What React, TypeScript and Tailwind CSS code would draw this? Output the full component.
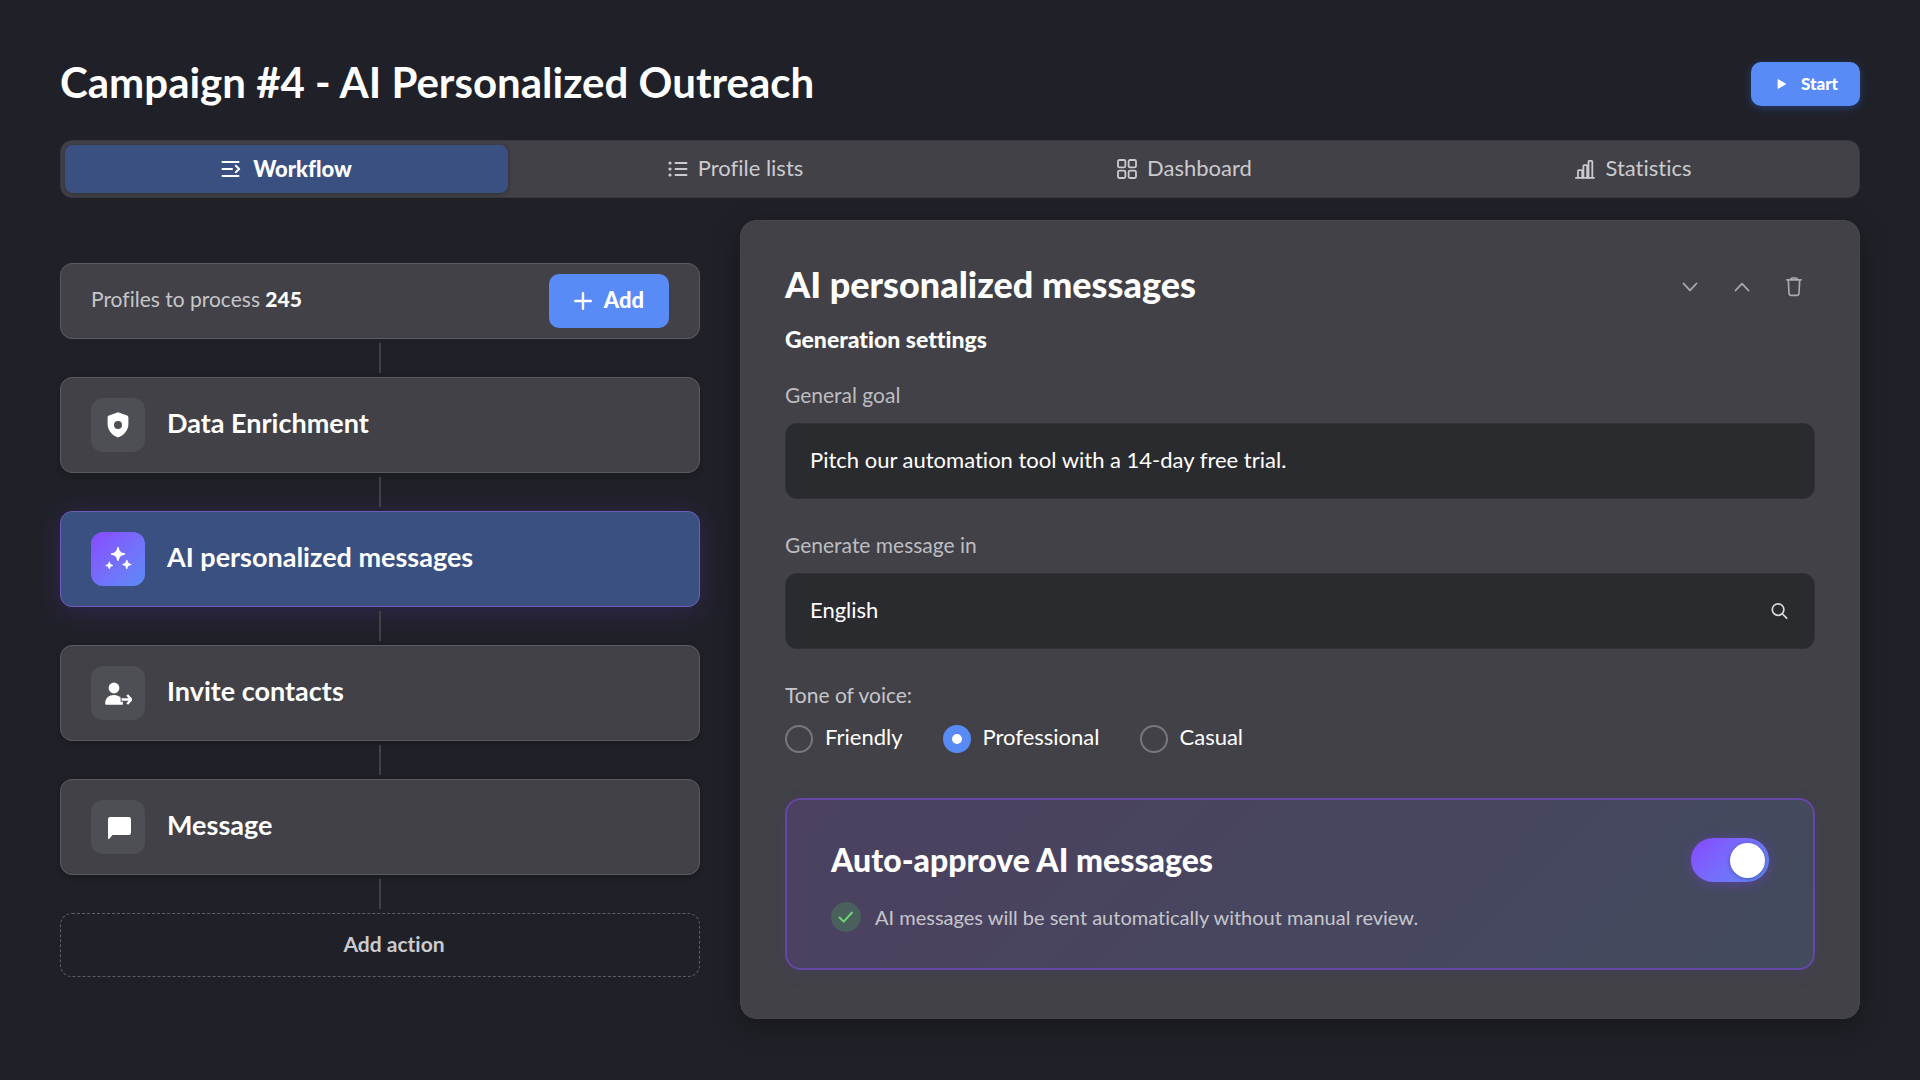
import React, { useState } from 'react'

type IconProps = { className?: string }

const tabs = [
  { id: 'workflow', label: 'Workflow', icon: WorkflowIcon },
  { id: 'profiles', label: 'Profile lists', icon: ListIcon },
  { id: 'dashboard', label: 'Dashboard', icon: GridIcon },
  { id: 'statistics', label: 'Statistics', icon: ChartIcon },
]

const steps = [
  { id: 'enrichment', label: 'Data Enrichment', icon: ShieldIcon },
  { id: 'ai', label: 'AI personalized messages', icon: SparklesIcon },
  { id: 'invite', label: 'Invite contacts', icon: InviteIcon },
  { id: 'message', label: 'Message', icon: MessageIcon },
]

const tones = ['Friendly', 'Professional', 'Casual']

export default function App() {
  return (
    <main className="min-h-screen bg-[#202128] px-15 py-15 font-['Lato','Noto_Sans',sans-serif] text-white [font-variant-ligatures:none]">
      <header className="flex min-h-12 items-center justify-between">
        <h1 className="pb-1 text-[42px] leading-11 font-bold">Campaign #4 - AI Personalized Outreach</h1>
        <button className="flex h-11 items-center gap-2.5 rounded-[10px] bg-[#598bf6] px-[22px] text-[17px] font-black shadow-[0_2px_8px_rgba(40,100,220,0.4)]">
          <PlayIcon className="size-[18px]" />
          Start
        </button>
      </header>

      <Tabs />

      <div className="mt-[22px] grid grid-cols-[4fr_7fr] items-start gap-10">
        <Workflow />
        <SettingsPanel />
      </div>
    </main>
  )
}

function Tabs() {
  const [active, setActive] = useState('workflow')

  return (
    <nav className="mt-8 grid grid-cols-4 gap-1.5 rounded-xl border border-[#38393f] bg-[#414147] p-1">
      {tabs.map((tab) => (
        <button
          key={tab.id}
          onClick={() => setActive(tab.id)}
          className={
            active === tab.id
              ? 'flex h-12 items-center justify-center gap-3 rounded-lg bg-[#3a5080] text-[22px] font-black text-white shadow-[0_1px_4px_rgba(0,0,0,0.3)]'
              : 'flex h-12 items-center justify-center gap-2.5 rounded-lg text-[22px] text-[#cbcbcf]'
          }
        >
          <tab.icon className="size-5" />
          <span className={active === tab.id ? 'pb-px' : 'pb-1'}>{tab.label}</span>
        </button>
      ))}
    </nav>
  )
}

function Connector() {
  return <div className="mx-auto my-1 h-[30px] w-0.5 bg-[#404147]" />
}

function Workflow() {
  const [selected, setSelected] = useState('ai')

  return (
    <section className="pt-[43px]">
      <div className="flex items-center justify-between rounded-xl border border-[#5a5b61] bg-[#414147] px-[30px] py-2.5">
        <p className="pb-1 text-[21px] text-[#c6c6ca]">
          Profiles to process <strong className="font-black text-white">245</strong>
        </p>
        <button className="flex h-[54px] w-[120px] items-center justify-center gap-3 rounded-[10px] bg-[#598bf6] text-[22px] font-black">
          <PlusIcon className="size-[18px]" />
          <span className="pb-1">Add</span>
        </button>
      </div>

      {steps.map((step) => (
        <React.Fragment key={step.id}>
          <Connector />
          <button
            onClick={() => setSelected(step.id)}
            className={
              selected === step.id
                ? 'flex w-full items-center gap-[22px] rounded-xl border border-[#6f5cb8] bg-[#3a5080] px-[30px] py-5 text-left shadow-[0_4px_28px_rgba(120,60,240,0.2)]'
                : 'flex w-full items-center gap-[22px] rounded-xl border border-[#5a5b61] bg-[#414147] px-[30px] py-5 text-left shadow-[0_2px_6px_rgba(0,0,0,0.25)]'
            }
          >
            <span
              className={
                selected === step.id
                  ? 'flex size-[54px] items-center justify-center rounded-xl bg-linear-135 from-[#8747ff] to-[#5a8bf6]'
                  : 'flex size-[54px] items-center justify-center rounded-xl bg-[#4e4f54]'
              }
            >
              <step.icon className="size-7" />
            </span>
            <span className="pb-1 text-[27px] font-bold">{step.label}</span>
          </button>
        </React.Fragment>
      ))}

      <Connector />
      <button className="h-16 w-full rounded-xl border border-dashed border-[#5d5e63] pb-0.5 pl-7 text-[21px] font-bold text-[#cbcbcf]">
        Add action
      </button>
    </section>
  )
}

function SettingsPanel() {
  const [goal, setGoal] = useState('Pitch our automation tool with a 14-day free trial.')
  const [language, setLanguage] = useState('English')
  const [tone, setTone] = useState('Professional')
  const [autoApprove, setAutoApprove] = useState(true)

  return (
    <section className="rounded-2xl border border-[#46474c] bg-[#414147] px-11 pt-11 pb-12 shadow-[0_8px_28px_rgba(0,0,0,0.3)]">
      <div className="flex h-11 items-center justify-between">
        <h2 className="pb-1.5 text-[36px] leading-11 font-black">AI personalized messages</h2>
        <div className="flex gap-3 pr-px text-[#aaaab0]">
          <button aria-label="Move down" className="flex size-10 items-center justify-center">
            <ChevronDownIcon className="size-5" />
          </button>
          <button aria-label="Move up" className="flex size-10 items-center justify-center">
            <ChevronDownIcon className="size-5 rotate-180" />
          </button>
          <button aria-label="Delete" className="flex size-10 items-center justify-center">
            <TrashIcon className="size-[22px]" />
          </button>
        </div>
      </div>

      <h3 className="mt-4 text-[23px] leading-7 font-black">Generation settings</h3>

      <label htmlFor="goal" className="mt-7 block text-[21px] leading-7 text-[#bdbdc1]">
        General goal
      </label>
      <input
        id="goal"
        value={goal}
        onChange={(e) => setGoal(e.target.value)}
        className="mt-3.5 h-[76px] w-full rounded-xl border border-[#303136] bg-[#2a2b2f] px-6 pb-1 text-[22px] outline-none"
      />

      <label htmlFor="language" className="mt-8 block text-[21px] leading-7 text-[#bdbdc1]">
        Generate message in
      </label>
      <div className="mt-3.5 flex h-[76px] items-center rounded-xl border border-[#303136] bg-[#2a2b2f] px-6">
        <input
          id="language"
          value={language}
          onChange={(e) => setLanguage(e.target.value)}
          className="min-w-0 flex-1 pb-1 text-[22px] outline-none"
        />
        <SearchIcon className="size-5 text-[#dcdcde]" />
      </div>

      <fieldset className="mt-8">
        <legend className="text-[21px] leading-7 text-[#c6c6ca]">Tone of voice:</legend>
        <div className="mt-4 flex gap-10">
          {tones.map((name) => (
            <label key={name} className="flex h-7 items-center gap-3 text-[22px] leading-7">
              <input
                type="radio"
                name="tone"
                checked={tone === name}
                onChange={() => setTone(name)}
                className="size-7 appearance-none rounded-full border-2 border-[#77777d] checked:border-[9px] checked:border-[#598bf6] checked:bg-white"
              />
              <span className="pb-1">{name}</span>
            </label>
          ))}
        </div>
      </fieldset>

      <div className="mt-[45px] rounded-2xl border-2 border-[#6646a6] bg-linear-135 from-[#4b4060] to-[#434b5e] px-11 pt-[38px] pb-9 shadow-[0_4px_20px_rgba(120,60,240,0.08)]">
        <div className="flex items-center justify-between">
          <label htmlFor="auto-approve" className="text-[32px] leading-11 font-black">
            Auto-approve AI messages
          </label>
          <input
            id="auto-approve"
            type="checkbox"
            role="switch"
            checked={autoApprove}
            onChange={(e) => setAutoApprove(e.target.checked)}
            className="flex h-11 w-[78px] appearance-none items-center rounded-full bg-[#5d5e63] px-1 shadow-[0_2px_12px_rgba(120,60,240,0.4)] before:size-[35px] before:rounded-full before:bg-white before:shadow-[0_1px_4px_rgba(0,0,0,0.3)] checked:justify-end checked:bg-linear-135 checked:from-[#8747ff] checked:to-[#5a8bf6]"
          />
        </div>
        <p className="mt-5 flex items-center gap-3.5 text-xl leading-[30px] text-[#c6c6ca]">
          <span className="flex size-[30px] items-center justify-center rounded-full bg-[#49605c]">
            <CheckIcon className="size-5 text-[#72d572]" />
          </span>
          AI messages will be sent automatically without manual review.
        </p>
      </div>
    </section>
  )
}

/* Icons */

function PlayIcon({ className }: IconProps) {
  return (
    <svg className={className} viewBox="0 0 18 18" fill="currentColor">
      <path d="M4.6 4.6c0-.4.4-.6.7-.4l7.4 4.4c.3.2.3.6 0 .8l-7.4 4.400c-.3.200-.7 0-.7-.4z" />
    </svg>
  )
}

function PlusIcon({ className }: IconProps) {
  return (
    <svg className={className} viewBox="0 0 18 18" fill="none" stroke="currentColor" strokeWidth="2.4" strokeLinecap="round">
      <path d="M9 1.2v15.6M1.2 9h15.6" />
    </svg>
  )
}

function WorkflowIcon({ className }: IconProps) {
  return (
    <svg className={className} viewBox="0 0 20 20" fill="none" stroke="currentColor" strokeWidth="2" strokeLinecap="round" strokeLinejoin="round">
      <path d="M1.5 3h16M1.5 10h9.5M1.5 17h16M14.8 6.8 18.2 10l-3.4 3.2" />
    </svg>
  )
}

function ListIcon({ className }: IconProps) {
  return (
    <svg className={className} viewBox="0 0 20 20" fill="none" stroke="currentColor" strokeWidth="2" strokeLinecap="round">
      <path d="M7.5 4h11M7.5 10h11M7.5 16h11" />
      <path d="M2 4h.01M2 10h.01M2 16h.01" strokeWidth="3.2" />
    </svg>
  )
}

function GridIcon({ className }: IconProps) {
  return (
    <svg className={className} viewBox="0 0 20 20" fill="none" stroke="currentColor" strokeWidth="1.8">
      <rect x="1" y="1" width="7.400" height="7.400" rx="1.5" />
      <rect x="11.600" y="1" width="7.400" height="7.400" rx="1.5" />
      <rect x="1" y="11.600" width="7.400" height="7.400" rx="1.5" />
      <rect x="11.600" y="11.600" width="7.400" height="7.400" rx="1.5" />
    </svg>
  )
}

function ChartIcon({ className }: IconProps) {
  return (
    <svg className={className} viewBox="0 0 20 20" fill="none" stroke="currentColor" strokeWidth="1.8" strokeLinejoin="round" strokeLinecap="round">
      <path d="M.9 18.8h18.2" />
      <path d="M3 18.5v-6.6a.7.7 0 0 1 .7-.7h2.800a.7.7 0 0 1 .7.7v6.600M8.400 18.500V6.900a.7.7 0 0 1 .7-.7h2.400a.7.7 0 0 1 .7.7v11.600M13.500 18.500V2.600a.7.7 0 0 1 .7-.7h2.400a.7.7 0 0 1 .7.7v15.900" />
    </svg>
  )
}

function ShieldIcon({ className }: IconProps) {
  return (
    <svg className={className} viewBox="0 0 28 28" fill="currentColor" fillRule="evenodd">
      <path d="M13.3 1.5a2 2 0 0 1 1.4 0l8.4 3a2 2 0 0 1 1.3 1.9V13c0 6-4.2 11.2-9.8 13.2a1.8 1.8 0 0 1-1.2 0C7.8 24.2 3.6 19 3.6 13V6.4a2 2 0 0 1 1.3-1.9zM14 10a4 4 0 1 0 0 8 4 4 0 0 0 0-8z" />
    </svg>
  )
}

function SparklesIcon({ className }: IconProps) {
  return (
    <svg className={className} viewBox="0 0 28 28" fill="currentColor">
      <path d="M14 1.8c.4 0 .6.2.7.6.9 4 1.9 5 5.9 5.9.8.2.8 1.2 0 1.4-4 .9-5 1.9-5.9 5.9-.2.8-1.2.8-1.4 0-.9-4-1.9-5-5.9-5.9-.8-.2-.8-1.2 0-1.4 4-.9 5-1.9 5.9-5.9.1-.4.3-.6.7-.6z" />
      <path d="M22.8 14.8c.3 0 .5.2.6.5.5 2.4 1.2 3.1 3.6 3.6.6.1.6 1 0 1.2-2.4.5-3.1 1.2-3.6 3.6-.1.6-1 .6-1.2 0-.5-2.4-1.2-3.1-3.6-3.6-.6-.1-.6-1 0-1.2 2.4-.5 3.1-1.2 3.6-3.6.1-.3.3-.5.6-.5z" />
      <path d="M5.3 16.6c.3 0 .4.2.5.4.4 1.9 1 2.5 2.9 2.9.5.1.5.9 0 1-1.9.4-2.5 1-2.9 2.9-.1.5-.9.5-1 0-.4-1.9-1-2.5-2.9-2.9-.5-.1-.5-.9 0-1 1.9-.4 2.5-1 2.9-2.9.1-.2.2-.4.5-.4z" />
    </svg>
  )
}

function InviteIcon({ className }: IconProps) {
  return (
    <svg className={className} viewBox="0 0 28 28" fill="currentColor">
      <circle cx="10" cy="9" r="5.4" />
      <path d="M1.2 24.8c0-5.600 3.600-8.800 8.800-8.800 2.800 0 5.100.9 6.600 2.500v4.200h2.200v3.100H2.200a1 1 0 0 1-1-1z" />
      <path d="M17.6 20.5h9M23.2 16l4.200 4.500-4.200 4.500" fill="none" stroke="currentColor" strokeWidth="2.4" />
    </svg>
  )
}

function MessageIcon({ className }: IconProps) {
  return (
    <svg className={className} viewBox="0 0 28 28" fill="currentColor">
      <path d="M6.2 4h18.6A2.2 2.2 0 0 1 27 6.2v13.600a2.200 2.200 0 0 1-2.200 2.200H8.500l-3.400 3.900c-.4.400-1.100.2-1.100-.4V6.200A2.200 2.200 0 0 1 6.200 4z" />
    </svg>
  )
}

function ChevronDownIcon({ className }: IconProps) {
  return (
    <svg className={className} viewBox="0 0 20 20" fill="none" stroke="currentColor" strokeWidth="1.8" strokeLinecap="round" strokeLinejoin="round">
      <path d="m3.5 6.500 6.500 6.800 6.500-6.800" />
    </svg>
  )
}

function TrashIcon({ className }: IconProps) {
  return (
    <svg className={className} viewBox="0 0 20 20" fill="none" stroke="currentColor" strokeWidth="1.5" strokeLinecap="round" strokeLinejoin="round">
      <path d="M3.500 3.500h13M6.800 3.300C7 2.200 7.600 1.800 8.500 1.800h3c.9 0 1.500.4 1.700 1.500M4.800 3.700l.7 12.200a1.900 1.900 0 0 0 1.900 1.700h5.200a1.900 1.900 0 0 0 1.900-1.700l.7-12.200" />
    </svg>
  )
}

function SearchIcon({ className }: IconProps) {
  return (
    <svg className={className} viewBox="0 0 20 20" fill="none" stroke="currentColor" strokeWidth="1.7" strokeLinecap="round">
      <circle cx="8.1" cy="8.6" r="5.800" />
      <path d="m12.500 13 4.200 4.200" />
    </svg>
  )
}

function CheckIcon({ className }: IconProps) {
  return (
    <svg className={className} viewBox="0 0 20 20" fill="none" stroke="currentColor" strokeWidth="1.9" strokeLinecap="round" strokeLinejoin="round">
      <path d="m3.500 10.500 4.200 4.200 8.300-9.200" />
    </svg>
  )
}
